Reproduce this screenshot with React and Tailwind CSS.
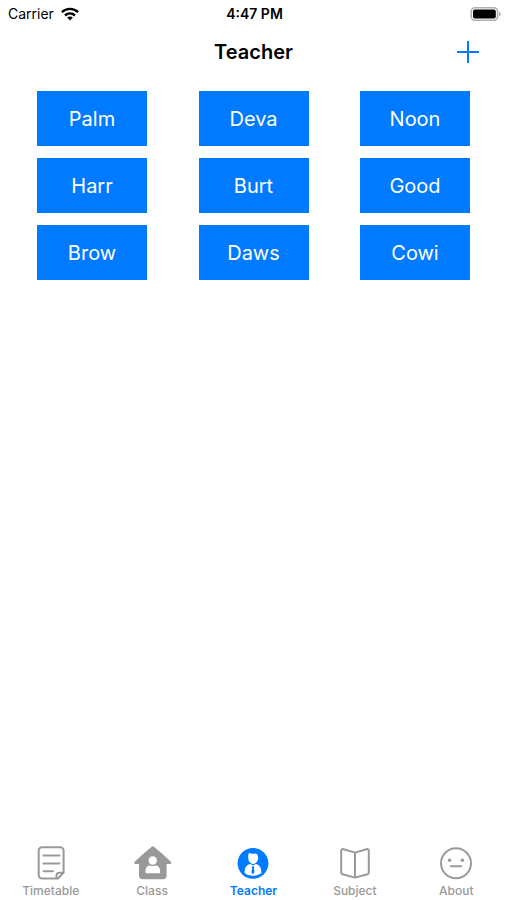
import { useState } from 'react';

const teachers = ['Palm', 'Deva', 'Noon', 'Harr', 'Burt', 'Good', 'Brow', 'Daws', 'Cowi'];

function TimetableIcon() {
    return (
        <svg width="40" height="36" viewBox="0 0 40 36" fill="none" stroke="currentColor" strokeWidth="2" strokeLinecap="round" strokeLinejoin="round">
            <path d="M27 33.5H11a3.3 3.3 0 0 1-3.3-3.3V5.6A3.3 3.3 0 0 1 11 2.3h18.3a3.3 3.3 0 0 1 3.3 3.3v22z" />
            <path d="M25.5 33.3v-2.6c0-2 1-3 3-3h3.8" />
            <path d="M12.5 10.5h16M12.5 18.5h16M12.5 26.3h9.5" />
        </svg>
    );
}

function ClassIcon() {
    return (
        <svg width="40" height="36" viewBox="0 0 40 36">
            <path
                fill="currentColor"
                d="M19.4 1.9a2 2 0 0 1 2.8 0l6.6 5.6 9.9 9c1.2 1.1.6 2.5-.9 2.5h-3.2v11.7c0 2.2-1.3 3.5-3.5 3.5H10.5C8.300 34.200 7 32.900 7 30.700V19H3.800c-1.500 0-2.100-1.400-.9-2.500l9.900-9z"
            />
            <circle cx="20.800" cy="15.500" r="4.200" fill="#fff" />
            <path fill="#fff" d="M13.400 26.500c0-3.800 2.100-6 4.600-6 1.800.8 3.800.8 5.600 0 2.500 0 4.600 2.200 4.600 6 0 1.300-.5 1.800-1.600 1.800H15c-1.100 0-1.600-.5-1.600-1.800z" />
        </svg>
    );
}

function TeacherIcon() {
    return (
        <svg width="40" height="36" viewBox="0 0 40 36">
            <circle cx="20" cy="18.3" r="15.4" fill="currentColor" />
            <path fill="#fff" d="M15.200 12.500c0-2.600.2-4.200 1.200-4.400 2 .8 4.300.6 6.200.3 1.600.5 2.600 2 2.600 4.200 0 3.700-2.200 6.300-5 6.300s-5-2.700-5-6.400z" />
            <path fill="#fff" d="M11.600 28c0-5.100 1.600-7.900 5.400-8.900l3 1.200 3-1.200c3.800 1 5.400 3.800 5.400 8.900-1.800 1.700-5 2.700-8.400 2.700s-6.600-1-8.400-2.700z" />
            <path fill="currentColor" d="M18.700 21.300h2.600l-.5 1.700.7 4.200-1.500 2-1.500-2 .7-4.200z" />
        </svg>
    );
}

function SubjectIcon() {
    return (
        <svg width="40" height="36" viewBox="0 0 40 36" fill="none" stroke="currentColor" strokeWidth="2" strokeLinejoin="round">
            <path d="M20 8v24.5M20 7.6L8.6 4.2c-1.6-.5-2.4.2-2.4 1.6v21.6c0 1 .5 1.6 1.4 1.9L20 32.6l12.4-3.3c.9-.3 1.4-.9 1.4-1.9V5.8c0-1.4-.8-2.1-2.4-1.6z" />
        </svg>
    );
}

function AboutIcon() {
    return (
        <svg width="40" height="36" viewBox="0 0 40 36" fill="none" stroke="currentColor" strokeWidth="2" strokeLinecap="round">
            <circle cx="20" cy="18.3" r="15" />
            <path d="M15 21.3h10" />
            <circle cx="13.6" cy="15.2" r="1.7" fill="currentColor" stroke="none" />
            <circle cx="26.4" cy="15.2" r="1.7" fill="currentColor" stroke="none" />
        </svg>
    );
}

const tabs = [
    { name: 'Timetable', Icon: TimetableIcon },
    { name: 'Class', Icon: ClassIcon },
    { name: 'Teacher', Icon: TeacherIcon },
    { name: 'Subject', Icon: SubjectIcon },
    { name: 'About', Icon: AboutIcon },
];

function StatusBar() {
    return (
        <div className="grid grid-cols-3 items-center h-7 pl-2 pr-1.5 text-sm leading-5">
            <div className="flex items-center gap-1.5">
                <span>Carrier</span>
                <svg width="20" height="14" viewBox="0 0 18 14" fill="none" stroke="currentColor" strokeWidth="2.4">
                    <path d="M.9 5.2c4.6-4.4 11.6-4.4 16.2 0" />
                    <path d="M4 8.5c2.9-2.7 7.1-2.7 10 0" />
                    <path d="M9 13.6l-2.8-3c1.6-1.4 4-1.4 5.6 0z" fill="currentColor" stroke="none" />
                </svg>
            </div>
            <span className="text-center font-semibold">4:47 PM</span>
            <svg className="justify-self-end" width="32" height="16" viewBox="0 0 32 16">
                <rect x="2.2" y="1.7" width="26.4" height="12.6" rx="3.8" fill="#fff" stroke="#b0b0b0" strokeWidth="1.6" />
                <rect x="4" y="3.4" width="22.8" height="9.2" rx="2" fill="#000" />
                <path d="M30 5.8c2.4.8 2.4 3.6 0 4.4z" fill="#b0b0b0" />
            </svg>
        </div>
    );
}

export default function App() {
    const [active, setActive] = useState('Teacher');

    return (
        <div className="flex flex-col min-h-screen bg-white text-black font-['Inter','Liberation_Sans',sans-serif]">
            <StatusBar />

            <header className="grid grid-cols-3 items-center h-12 px-6">
                <h1 className="col-start-2 text-center text-xl font-semibold">Teacher</h1>
                <button type="button" aria-label="Add teacher" className="justify-self-end p-1 text-[#007aff]">
                    <svg width="22" height="22" viewBox="0 0 22 22" fill="none" stroke="currentColor" strokeWidth="2">
                        <path d="M11 0v22M0 11h22" />
                    </svg>
                </button>
            </header>

            <main className="flex-1 px-[37px] pt-[15px]">
                <div className="grid grid-cols-[repeat(3,110px)] justify-between gap-y-3">
                    {teachers.map((teacher) => (
                        <button key={teacher} type="button" className="h-[55px] bg-[#007aff] text-xl text-white">
                            {teacher}
                        </button>
                    ))}
                </div>
            </main>

            <nav className="grid grid-cols-5 pb-px">
                {tabs.map(({ name, Icon }) => (
                    <button
                        key={name}
                        type="button"
                        onClick={() => setActive(name)}
                        className={`flex flex-col items-center gap-0.5 text-xs ${active === name ? 'font-semibold text-[#007aff]' : 'font-medium text-[#999999]'}`}
                    >
                        <Icon />
                        <span>{name}</span>
                    </button>
                ))}
            </nav>
        </div>
    );
}
